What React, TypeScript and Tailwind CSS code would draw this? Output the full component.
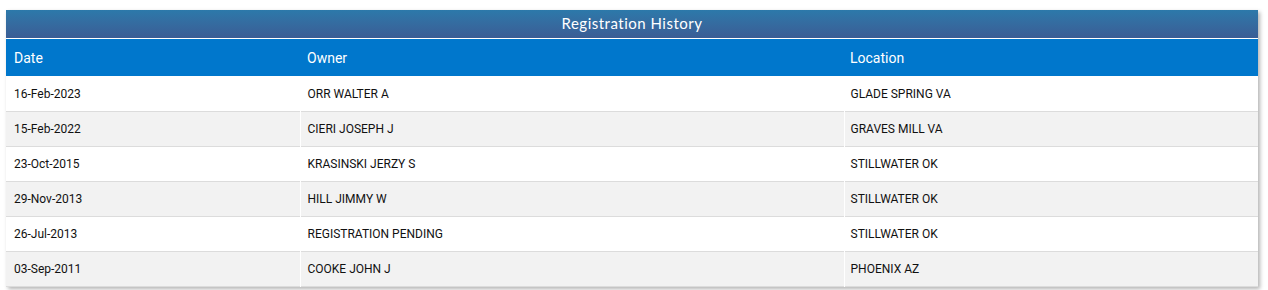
const rows = [
  { date: "16-Feb-2023", owner: "ORR WALTER A", location: "GLADE SPRING VA" },
  { date: "15-Feb-2022", owner: "CIERI JOSEPH J", location: "GRAVES MILL VA" },
  { date: "23-Oct-2015", owner: "KRASINSKI JERZY S", location: "STILLWATER OK" },
  { date: "29-Nov-2013", owner: "HILL JIMMY W", location: "STILLWATER OK" },
  { date: "26-Jul-2013", owner: "REGISTRATION PENDING", location: "STILLWATER OK" },
  { date: "03-Sep-2011", owner: "COOKE JOHN J", location: "PHOENIX AZ" },
];

export default function App() {
  return (
    <div className="w-[1268px] h-[290px] bg-white pt-[10px] pl-[6px]">
      <div className="w-[1252px] bg-white shadow-[2px_2px_4px_rgba(0,0,0,0.3)]">
        <div className="h-[29px] pb-[2px] flex items-center justify-center bg-gradient-to-b from-[#2c79aa] to-[#3a5d95] border-b border-white text-white text-[15px] tracking-[0.5px] font-['Lato','Noto_Sans',sans-serif]">
          Registration History
        </div>
        <table className="w-full border-collapse font-['Roboto','Liberation_Sans',sans-serif] text-[12px] text-[#111]">
          <colgroup>
            <col className="w-[294px]" />
            <col className="w-[544px]" />
            <col />
          </colgroup>
          <thead>
            <tr className="h-[37px] bg-[#0077cc] text-white text-[14px] text-left">
              <th className="font-normal px-[8px] pt-[2px]">Date</th>
              <th className="font-normal px-[7px] pt-[2px]">Owner</th>
              <th className="font-normal px-[6px] pt-[2px]">Location</th>
            </tr>
          </thead>
          <tbody>
            {rows.map((r, i) => (
              <tr
                key={i}
                className={`h-[35px] border-b border-[#dcdcdc] ${i % 2 === 1 ? "bg-[#f2f2f2]" : "bg-white"}`}
              >
                <td className="px-[8px] pt-[1px] border-r border-white">{r.date}</td>
                <td className="px-[7px] pt-[1px] border-r border-white">{r.owner}</td>
                <td className="px-[6px] pt-[1px]">{r.location}</td>
              </tr>
            ))}
          </tbody>
        </table>
      </div>
    </div>
  );
}
